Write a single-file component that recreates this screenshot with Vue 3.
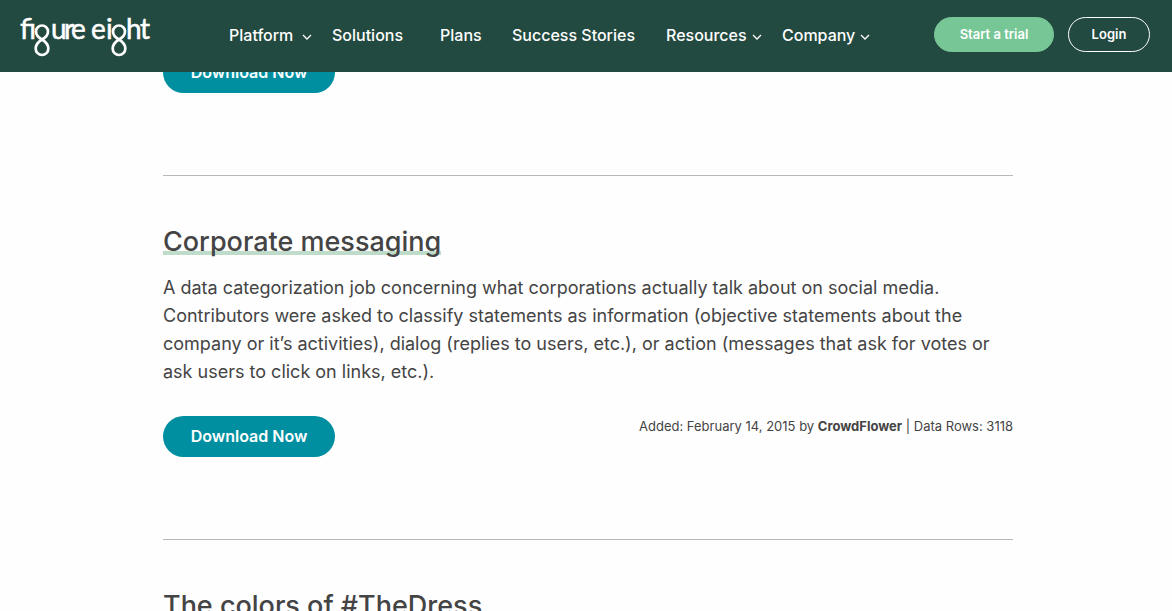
<script setup>
const navItems = [
  { label: 'Platform', menu: true },
  { label: 'Solutions', menu: false },
  { label: 'Plans', menu: false },
  { label: 'Success Stories', menu: false },
  { label: 'Resources', menu: true },
  { label: 'Company', menu: true },
]
</script>

<template>
  <div class="page">
    <header class="topbar">
      <a class="logo" href="#" aria-label="figure eight">
        <svg width="136" height="46" viewBox="0 0 136 46" aria-hidden="true">
          <g class="wordmark">
            <text x="0" y="27">fi</text>
            <text x="31 44 51" y="27">ure</text>
            <text x="71 86" y="27">ei</text>
            <text x="106 120" y="27">ht</text>
          </g>
          <g class="loops">
            <path d="M22 27.500C17.500 25 16 22.500 16 19.500a6 6 0 0 1 12 0C28 22.500 26.500 25 22 27.500C17 30.500 15.700 33 15.700 36.700a6.300 6.300 0 0 0 12.600 0C28.300 33 27 30.500 22 27.500Z" />
            <path d="M99 27.500C94.500 25 93 22.500 93 19.500a6 6 0 0 1 12 0C105 22.500 103.500 25 99 27.500C94 30.500 92.700 33 92.700 36.700a6.300 6.300 0 0 0 12.600 0C105.300 33 104 30.500 99 27.500Z" />
          </g>
        </svg>
      </a>
      <nav class="nav" aria-label="Main">
        <a v-for="item in navItems" :key="item.label" class="nav-link" href="#">
          {{ item.label }}
          <svg v-if="item.menu" class="chevron" width="10" height="6" viewBox="0 0 10 6" aria-hidden="true">
            <path d="M1 1l4 4 4-4" />
          </svg>
        </a>
      </nav>
      <div class="actions">
        <a class="pill trial" href="#">Start a trial</a>
        <a class="pill login" href="#">Login</a>
      </div>
    </header>

    <main class="content">
      <section class="entry">
        <div class="entry-foot">
          <a class="download" href="#">Download Now</a>
        </div>
      </section>
      <section class="entry">
        <h2><a class="title underlined" href="#">Corporate messaging</a></h2>
        <p class="summary">
          A data categorization job concerning what corporations actually talk about on social media.
          Contributors were asked to classify statements as information (objective statements about the
          company or it’s activities), dialog (replies to users, etc.), or action (messages that ask for votes or
          ask users to click on links, etc.).
        </p>
        <div class="entry-foot">
          <a class="download" href="#">Download Now</a>
          <p class="meta">Added: February 14, 2015 by <strong>CrowdFlower</strong> | Data Rows: 3118</p>
        </div>
      </section>
      <section class="entry">
        <h2><a class="title" href="#">The colors of #TheDress</a></h2>
      </section>
    </main>
  </div>
</template>

<style>
body {
  margin: 0;
  background: #fefefe;
}
</style>

<style scoped>
.page {
  height: 100vh;
  overflow: hidden;
  font-family: Inter, "Liberation Sans", sans-serif;
  color: #444;
}
a {
  color: inherit;
  text-decoration: none;
}
.topbar {
  position: relative;
  z-index: 1;
  box-sizing: border-box;
  height: 72px;
  padding: 0 22px 3px 20px;
  display: flex;
  align-items: center;
  background: #234a40;
  color: #fff;
}
.logo {
  display: flex;
  width: 209px;
}
.logo svg {
  overflow: visible;
}
.wordmark {
  font: 400 28px Lato, sans-serif;
  fill: #fff;
  stroke: #fff;
  stroke-width: 0.5;
}
.loops {
  fill: none;
  stroke: #fff;
  stroke-width: 2.7;
  stroke-linejoin: round;
}
.nav {
  display: grid;
  grid-template-columns: 103px 108px 72px 154px 116px 108px;
  font-size: 16px;
  line-height: 24px;
  font-weight: 500;
}
.nav-link {
  display: flex;
  align-items: center;
  justify-content: space-between;
  padding-right: 20px;
  white-space: nowrap;
}
.chevron {
  margin-top: 4px;
  fill: none;
  stroke: #fff;
  stroke-width: 1.3;
}
.actions {
  display: flex;
  gap: 14px;
  margin-left: auto;
}
.pill {
  box-sizing: border-box;
  height: 35px;
  min-width: 82px;
  border: 1px solid #fff;
  border-radius: 18px;
  font-size: 13px;
  line-height: 33px;
  font-weight: 600;
  text-align: center;
}
.trial {
  min-width: 120px;
  border-color: #77c696;
  background: #77c696;
}
.content {
  box-sizing: border-box;
  max-width: 854px;
  margin: -20px auto 0;
  padding-left: 4px;
}
.entry {
  padding-bottom: 82px;
}
.entry + .entry {
  border-top: 1px solid #b9b9b9;
  padding-top: 48px;
}
h2 {
  margin: 0 0 14px;
  font-size: 27px;
  line-height: 36px;
  font-weight: 500;
}
.underlined {
  background: linear-gradient(#bfdccb, #bfdccb) 0 26px / 100% 4px no-repeat;
}
.summary {
  margin: 0 0 30px;
  font-size: 18px;
  line-height: 28px;
}
.entry-foot {
  display: flex;
  justify-content: space-between;
  align-items: flex-start;
}
.download {
  box-sizing: border-box;
  min-width: 172px;
  border-radius: 21px;
  background: #008fa1;
  color: #fff;
  font-size: 16px;
  line-height: 41px;
  font-weight: 600;
  text-align: center;
}
.meta {
  margin: 0;
  font-size: 13px;
  line-height: 21px;
}
</style>
